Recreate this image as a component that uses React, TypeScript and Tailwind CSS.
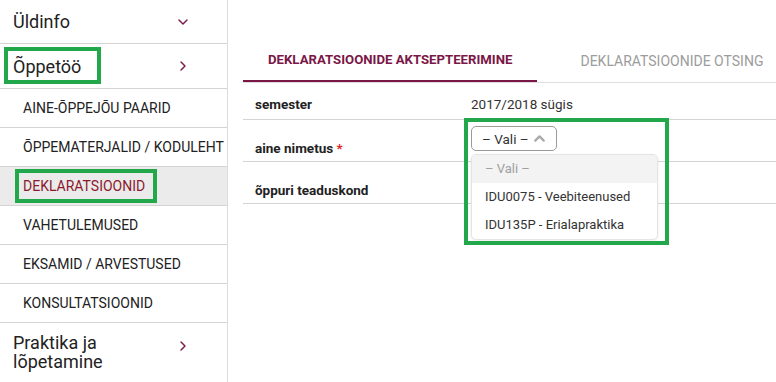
import { ChevronDown, ChevronRight, ChevronUp } from "lucide-react";

const SUB_ITEMS = [
  { label: "AINE-ÕPPEJÕU PAARID" },
  { label: "ÕPPEMATERJALID / KODULEHT" },
  { label: "DEKLARATSIOONID", active: true },
  { label: "VAHETULEMUSED" },
  { label: "EKSAMID / ARVESTUSED" },
  { label: "KONSULTATSIOONID" },
];

const OPTIONS = ["IDU0075 - Veebiteenused", "IDU135P - Erialapraktika"];

function Sidebar() {
  return (
    <div className="relative w-[228px] shrink-0 border-r border-[#dcdcdc] bg-white">
      <div className="flex h-[44px] items-center justify-between border-b border-[#d4d4d4] pl-[13px] pr-[36px]">
        <span className="text-[18px] text-[#222]">Üldinfo</span>
        <ChevronDown size={16} strokeWidth={2.2} className="text-[#7b1d4b]" />
      </div>
      <div className="flex h-[45px] items-center justify-between border-b border-[#d4d4d4] pl-[13px] pr-[36px]">
        <span className="text-[18px] text-[#222]">Õppetöö</span>
        <ChevronRight size={16} strokeWidth={2.2} className="text-[#7b1d4b]" />
      </div>
      {SUB_ITEMS.map((item) => (
        <div
          key={item.label}
          className={
            "flex h-[39px] items-center border-b border-[#d4d4d4] pl-[23px] text-[14px] " +
            (item.active ? "bg-[#ebebeb] text-[#8b1a2b]" : "text-[#222]")
          }
        >
          {item.label}
        </div>
      ))}
      <div className="flex h-[59px] items-start justify-between pl-[13px] pr-[36px] pt-[10px]">
        <span className="text-[18px] leading-[19px] text-[#222]">
          Praktika ja
          <br />
          lõpetamine
        </span>
        <ChevronRight size={16} strokeWidth={2.2} className="mt-[5px] text-[#7b1d4b]" />
      </div>

      {/* annotation boxes */}
      <div className="absolute left-[4px] top-[47px] h-[37px] w-[97px] border-4 border-[#22a84a]" />
      <div className="absolute left-[15px] top-[169px] h-[34px] w-[142px] border-4 border-[#22a84a]" />
    </div>
  );
}

function Content() {
  return (
    <div className="min-w-0 flex-1 pl-[15px]">
      <div className="mt-[40px] flex h-[43px] border-b border-[#dedede]">
        <div className="flex h-[42px] shrink-0 items-center whitespace-nowrap border-b-2 border-[#7a1747] px-[25px] text-[13.2px] font-bold text-[#7a1747]">
          DEKLARATSIOONIDE AKTSEPTEERIMINE
        </div>
        <div className="ml-[18px] flex h-[42px] shrink-0 items-center whitespace-nowrap px-[25px] text-[14px] text-[#9c9c9c]">
          DEKLARATSIOONIDE OTSING
        </div>
      </div>

      <div className="flex h-[37px] border-b border-[#d4d4d4] pt-[13px] text-[13.5px] leading-[16px]">
        <div className="w-[228px] pl-[12px] font-bold text-[#222]">semester</div>
        <div className="text-[#333]">2017/2018 sügis</div>
      </div>

      <div className="flex h-[42px] border-b border-[#d4d4d4] text-[13.5px] leading-[16px]">
        <div className="w-[228px] pl-[12px] pt-[20px] font-bold text-[#222]">
          aine nimetus <span className="text-[#e02020]">*</span>
        </div>
        <div className="relative pt-[6px]">
          <div className="flex h-[25px] w-[86px] items-center justify-between rounded-[5px] border border-[#9a9a9a] pl-[10px] pr-[8px] text-[#333]">
            <span>– Vali –</span>
            <ChevronUp size={17} strokeWidth={3.2} className="text-[#aaa]" />
          </div>
          <div className="absolute left-0 top-[34px] z-10 w-[187px] overflow-hidden rounded-[5px] border border-[#e4e4e4] bg-white text-[13px] shadow-[0_1px_3px_rgba(0,0,0,0.08)]">
            <div className="flex h-[28px] items-center bg-[#f3f3f3] pl-[13px] text-[#a0a0a0]">– Vali –</div>
            {OPTIONS.map((o) => (
              <div key={o} className="flex h-[28px] items-center pl-[13px] text-[#333]">
                {o}
              </div>
            ))}
          </div>
          <div className="absolute left-[-7px] top-[-2px] z-20 h-[127px] w-[205px] border-4 border-[#22a84a]" />
        </div>
      </div>

      <div className="flex h-[42px] border-b border-[#d4d4d4] text-[13.5px] leading-[16px]">
        <div className="w-[228px] pl-[12px] pt-[20px] font-bold text-[#222]">õppuri teaduskond</div>
      </div>
    </div>
  );
}

export default function App() {
  return (
    <div className="flex h-[382px] w-[776px] overflow-hidden bg-white font-['Roboto',sans-serif]">
      <Sidebar />
      <Content />
    </div>
  );
}
